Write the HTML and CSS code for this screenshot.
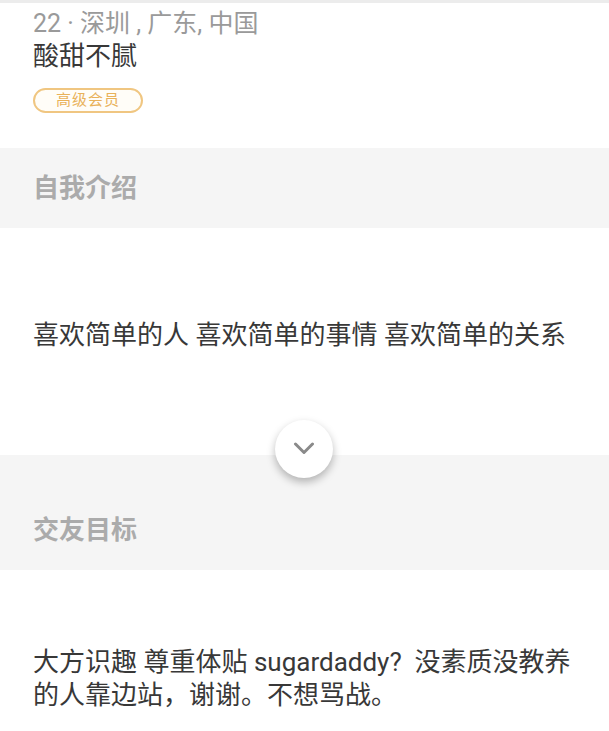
FILE: index.html
```html
<!DOCTYPE html>
<html lang="zh-CN">

<head>
  <meta charset="UTF-8">
  <meta name="viewport" content="width=device-width, initial-scale=1.0">
  <title>个人资料</title>
  <link rel="stylesheet" href="styles.css">
</head>

<body>
<div class="profile">
  <div class="profileInfo">
    <div class="meta">22 · 深圳 , 广东, 中国</div>
    <div class="motto">酸甜不腻</div>
    <span class="badge">高级会员</span>
  </div>

  <div class="sectionHead">自我介绍</div>
  <div class="sectionBody intro">
    <p>喜欢简单的人 喜欢简单的事情 喜欢简单的关系</p>
    <button class="more" aria-label="展开">
      <svg width="22" height="14" viewBox="0 0 22 14">
        <path d="M2.5 2 L11 10.5 L19.5 2" fill="none" stroke="#8a8a8a" stroke-width="3" stroke-linecap="round" stroke-linejoin="round"/>
      </svg>
    </button>
  </div>

  <div class="sectionHead second">交友目标</div>
  <div class="sectionBody goal">
    <p>大方识趣 尊重体贴 sugardaddy?&nbsp; 没素质没教养的人靠边站，谢谢。不想骂战。</p>
  </div>
</div>
</body>

</html>
```

FILE: styles.css
```css
html {
  --font: Roboto, 'Noto Sans CJK SC', sans-serif;
  --dark: #383838;
  --gray: #9a9a9a;
  --title: #ababab;
  --panel: #f5f5f5;
  --gold: #e9b25a;
}

body {
  margin: 0;
  background: #fff;
  font-family: var(--font);
}

.profile {
  width: 609px;
  overflow: hidden;
}

.profileInfo {
  height: 148px;
  box-sizing: border-box;
  border-top: 3px solid #ececec;
  padding: 5px 33px 0;
}

.meta {
  color: var(--gray);
  font-size: 25px;
  line-height: 32px;
}

.motto {
  color: var(--dark);
  font-size: 26px;
  line-height: 32px;
}

.badge {
  display: inline-block;
  margin-top: 16px;
  width: 106px;
  height: 21px;
  line-height: 21px;
  border: 2px solid #f0c681;
  border-radius: 13px;
  background: #fffdf8;
  color: var(--gold);
  font-size: 15px;
  text-align: center;
  letter-spacing: 1px;
  vertical-align: top;
}

.sectionHead {
  background: var(--panel);
  color: var(--title);
  font-size: 26px;
  font-weight: 700;
  padding: 0 33px;
  height: 80px;
  line-height: 80px;
}

.sectionHead.second {
  height: 115px;
  box-sizing: border-box;
  padding-top: 55px;
  line-height: 40px;
}

.sectionBody {
  position: relative;
  padding: 0 33px;
  color: var(--dark);
  font-size: 26px;
  line-height: 36px;
}

.sectionBody p {
  margin: 0;
}

.intro {
  height: 227px;
  box-sizing: border-box;
  padding-top: 89px;
}

.goal {
  height: 161px;
  box-sizing: border-box;
  padding-top: 76px;
  line-height: 33px;
}

.more {
  position: absolute;
  left: 275px;
  bottom: -23px;
  width: 58px;
  height: 58px;
  border: none;
  border-radius: 50%;
  background: #fff;
  box-shadow: 0 4px 8px rgba(0, 0, 0, 0.28);
  display: flex;
  align-items: center;
  justify-content: center;
  padding: 0;
  z-index: 1;
}
```
